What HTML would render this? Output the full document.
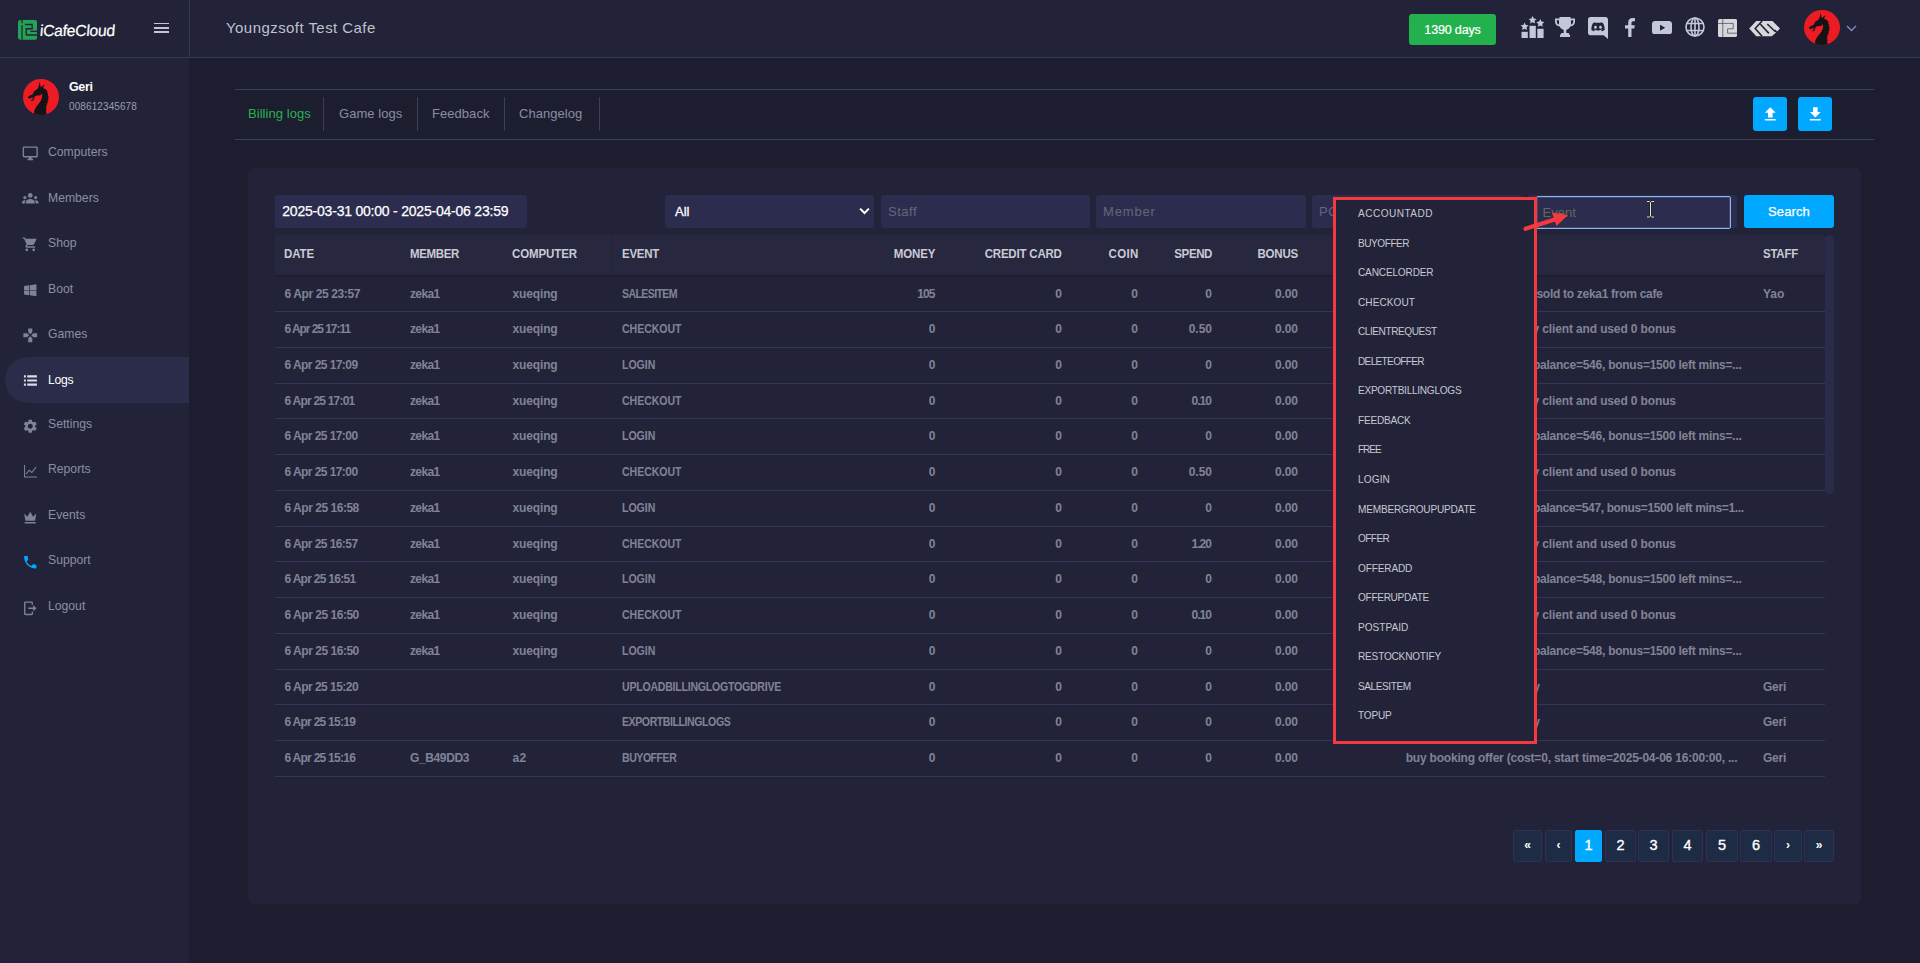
<!DOCTYPE html>
<html lang="en">
<head>
<meta charset="utf-8">
<title>iCafeCloud - Billing logs</title>
<style>
*{box-sizing:border-box;margin:0;padding:0}
html,body{width:1920px;height:963px;overflow:hidden}
body{background:#1d1d30;font-family:"Liberation Sans",sans-serif;color:#8a8da0;font-size:12px;position:relative}
.abs{position:absolute}
/* header */
#header{position:absolute;left:0;top:0;width:1920px;height:58px;background:#222338;border-bottom:1px solid #34375a}
#logo-box{position:absolute;left:0;top:0;width:190px;height:57px;border-right:1px solid #34375a}
#logo-ic{position:absolute;left:18px;top:20px;width:19.200px;height:19.800px}
#logo-tx{position:absolute;left:39px;top:20px;font-size:15.800px;color:#fff;letter-spacing:-.32px;line-height:22px;white-space:nowrap;-webkit-text-stroke:.2px #fff;transform:skewX(-5deg);transform-origin:0 100%}
#burger{position:absolute;left:153.500px;top:22.500px;width:15.500px;height:12px}
#burger i{display:block;height:1.900px;background:#c3c5d2;margin-bottom:2.500px}
#title{position:absolute;left:226px;top:18px;font-size:15px;line-height:20px;color:#bfc1cf;letter-spacing:.44px;white-space:nowrap}
#days{position:absolute;left:1409px;top:14px;width:87px;height:31px;background:#23b14d;border-radius:3px;color:#fff;font-size:12.5px;line-height:33px;text-align:center;letter-spacing:-.15px;-webkit-text-stroke:.2px #fff}
.hic{position:absolute;fill:#c4c7d8}
#av2{position:absolute;left:1804px;top:10px;width:36px;height:35px}
/* sidebar */
#sidebar{position:absolute;left:0;top:58px;width:189px;height:905px;background:#222338}
#av1{position:absolute;left:23.300px;top:20.800px;width:36px;height:36px}
#uname{position:absolute;left:69px;top:20px;font-size:12.500px;font-weight:bold;color:#fff;line-height:18px;letter-spacing:-.35px}
#uphone{position:absolute;left:69px;top:41.600px;font-size:10px;color:#9a9db0;line-height:14px;letter-spacing:.1px}
.mi{position:absolute;left:5px;width:184px;height:45.600px;margin-top:1.200px;border-radius:23px 0 0 23px;color:#8b8fa5;font-size:12.200px;line-height:46.800px;padding-left:43px;white-space:nowrap}
.mi svg{position:absolute;left:17.100px;top:15.400px;width:16.500px;height:16.500px;fill:#7f8399}
.mi.on{background:#2a2c49;color:#fff;letter-spacing:-.3px}
.mi.on svg{fill:#d9dbe6}
/* main */
#tabs{position:absolute;left:235px;top:89px;width:1639px;height:51px;border-top:1px solid #3c3e54;border-bottom:1px solid #3c3e54}
.tab{position:absolute;top:7px;height:35px;line-height:33.500px;font-size:13px;color:#8a8da0;white-space:nowrap;letter-spacing:.05px}
.tab.on{color:#27b24c}
.tsep{position:absolute;top:7px;width:1px;height:34px;background:#3c3e54}
.tbtn{position:absolute;top:7px;width:34px;height:34px;border-radius:3px;background:#00a8ff}
.tbtn svg{position:absolute;left:7.700px;top:7.900px;width:18.600px;height:18.600px;fill:#fff}
#card{position:absolute;left:248px;top:168px;width:1613px;height:736px;background:#222338;border-radius:6px}
.inp{position:absolute;top:27px;height:33px;background:#2c2d4e;border-radius:3px;font-size:13px;line-height:33px;color:#64667a;padding-left:8px;white-space:nowrap;overflow:hidden}
#evt{position:absolute;left:1287.500px;top:27.700px;width:195.500px;height:33.300px;background:#2c2d4e;border:1px solid #8ab4f8;border-radius:2px;box-shadow:inset 0 0 0 1px rgba(255,255,255,.12);font-size:13px;line-height:31px;color:#63665f;padding-left:6px}
#search{position:absolute;left:1496px;top:27px;width:90px;height:33px;background:#00a8ff;border-radius:3px;color:#fff;font-size:13px;line-height:33px;text-align:center;letter-spacing:.1px;-webkit-text-stroke:.25px #fff}
/* table */
#thead{position:absolute;left:27px;top:67px;width:1550px;height:42px;background:#27283f;border-bottom:2px solid #1d1e31}
#thead i{position:absolute;left:337px;top:0;width:1px;height:40px;background:rgba(0,0,0,.13)}
#thead span{position:absolute;top:0;line-height:38px;font-size:12.5px;font-weight:bold;color:#c9cad4;white-space:nowrap}
.rb{position:absolute;left:27px;width:1550px;height:1px;background:#33365a}
.r{position:absolute;left:27px;width:1550px;height:36px}
.r span{position:absolute;top:0;line-height:36px;font-size:12px;font-weight:bold;color:#808397;white-space:nowrap}
.ra{text-align:right}
#sb{position:absolute;left:1577px;top:67px;width:9px;height:259px;border-radius:5px;background:#292b48}
/* pagination */
.pg{position:absolute;top:662px;height:32px;background:#1d2b44;border:1px solid #2f3154;border-radius:2px;color:#fff;font-size:14.500px;line-height:29px;text-align:center;-webkit-text-stroke:.35px #fff}
.pg.sm{font-size:12px;font-weight:bold;line-height:28px;-webkit-text-stroke:0}
.pg.on{background:#00a8ff;border-color:#00a8ff}
/* dropdown */
#dd{position:absolute;left:1333.200px;top:196.900px;width:203.800px;height:547.300px;border:3.300px solid #f5393f;background:#222338}
#dd div{position:absolute;left:22.300px;font-size:11.200px;color:#c6c8d3;line-height:16px;white-space:nowrap}
</style>
</head>
<body>
<div id="header">
  <div id="logo-box">
    <svg id="logo-ic" viewBox="0 0 20 20" preserveAspectRatio="none"><rect x="0" y="0" width="20" height="20" rx="2.5" fill="#23a455"/><path d="M4.2 0v3.2M4.2 5v15" stroke="#222338" stroke-width="1.3" fill="none"/><path d="M7.2 4.6h7.6v4.2H8.6v6.4h11.4" stroke="#222338" stroke-width="1.4" fill="none"/><path d="M12.8 11.4h7.2" stroke="#222338" stroke-width="1.3"/></svg>
    <div id="logo-tx">iCafeCloud</div>
    <div id="burger"><i></i><i></i><i></i></div>
  </div>
  <div id="title">Youngzsoft Test Cafe</div>
  <div id="days">1390 days</div>
  <svg class="hic" style="left:1520px;top:15px;width:25px;height:24px" viewBox="0 0 25 24"><polygon points="4.60,7.40 5.83,9.90 8.59,10.30 6.60,12.25 7.07,15.00 4.60,13.70 2.13,15.00 2.60,12.25 0.61,10.30 3.37,9.90"/><polygon points="12.60,1.00 13.83,3.50 16.59,3.90 14.60,5.85 15.07,8.60 12.60,7.30 10.13,8.60 10.60,5.85 8.61,3.90 11.37,3.50"/><polygon points="20.30,4.10 21.53,6.60 24.29,7.00 22.30,8.95 22.77,11.70 20.30,10.40 17.83,11.70 18.30,8.95 16.31,7.00 19.07,6.60"/><rect x="1.500" y="16.800" width="6.300" height="6.200"/><rect x="9.500" y="10.800" width="6.300" height="12.200"/><rect x="17.300" y="13.800" width="6.300" height="9.200"/></svg><svg class="hic" style="left:1555px;top:17px;width:20px;height:20px" viewBox="0 0 20 20"><path d="M4.500 0h11v1.500H20v3.200c0 2.600-2 4.600-4.700 4.900-.8 1.700-2.300 2.900-4 3.300V16h2.200l1.500 2.200V20H5v-1.800L6.500 16h2.200v-3.100c-1.700-.4-3.200-1.600-4-3.300C2 9.300 0 7.300 0 4.700V1.500h4.500zM1.800 3.300v1.400c0 1.400.9 2.500 2.300 2.900-.1-.5-.1-1-.1-1.500V3.300zm16.400 0H16v2.800c0 .5 0 1-.1 1.500 1.400-.4 2.300-1.500 2.300-2.900z"/></svg><svg class="hic" style="left:1588px;top:17px;width:20px;height:22px" viewBox="0 0 20 22"><path fill-rule="evenodd" d="M2.200 0h15.300C18.900 0 20 1.100 20 2.400V22l-4.300-3.800H2.200C1 18.200 0 17.200 0 16V2.400C0 1.100 1 0 2.200 0zM7.300 5.300c-1.200.2-2.200.7-2.200.7C3.900 7.800 3.300 10 3.400 13c1.200 1 2.700 1.300 2.700 1.300l.7-1c-.6-.2-1.100-.5-1.100-.5l.3-.2c2.500 1.200 5.500 1.200 8 0l.3.200s-.5.300-1.100.5l.7 1s1.500-.3 2.700-1.300c.1-3-.5-5.200-1.700-7 0 0-1-.5-2.200-.7l-.3.600c-1.600-.3-3.200-.3-4.800 0zM7.500 8.700c.8 0 1.400.7 1.400 1.500s-.6 1.500-1.400 1.500-1.400-.7-1.400-1.500.6-1.500 1.400-1.500zm5 0c.8 0 1.400.7 1.400 1.500s-.6 1.500-1.400 1.500-1.400-.7-1.400-1.500.6-1.500 1.400-1.500z"/></svg><svg class="hic" style="left:1625px;top:18px;width:10px;height:19px" viewBox="0 0 10 19"><path d="M6.500 19v-8.500h2.800l.5-3.300H6.500V5c0-1 .4-1.700 1.800-1.700H10V.3C9.600.2 8.600 0 7.500 0 5 0 3.200 1.600 3.200 4.500v2.700H0v3.300h3.200V19z"/></svg><svg class="hic" style="left:1652px;top:20.500px;width:20px;height:13.500px" viewBox="0 0 20 13.500"><path fill-rule="evenodd" d="M3 0h14c1.700 0 3 1.300 3 3v7.500c0 1.700-1.300 3-3 3H3c-1.700 0-3-1.300-3-3V3c0-1.700 1.300-3 3-3zm5 3.700v6.100l5.200-3.050z"/></svg><svg class="hic" style="left:1685px;top:17px;width:20px;height:20px;fill:none;stroke:#c4c7d8;stroke-width:1.600" viewBox="0 0 20 20"><circle cx="10" cy="10" r="9"/><ellipse cx="10" cy="10" rx="4" ry="9"/><path d="M10 1v18M1.800 6.500h16.400M1.800 13.500h16.400"/></svg><svg class="hic" style="left:1718px;top:19px;width:19px;height:18px;fill:#d8d8dc" viewBox="0 0 19 18"><path d="M1.200 0h16.300c.8 0 1.500.7 1.500 1.500v15c0 .8-.7 1.500-1.500 1.500H1.500C.7 18 0 17.300 0 16.500V1.200z"/><path d="M4.800 0v18M0 4.400h15.200v5.400H9.600v4.400H19" fill="none" stroke="#222338" stroke-opacity=".75" stroke-width=".8"/></svg><svg class="hic" style="left:1749px;top:20px;width:31px;height:17px;fill:#d8d8dc" viewBox="0 0 31 17"><path d="M.2 8.500L7.250 1H23.500L31 8.500l-2.900 2.900-1.900-1.800-1 1L27.200 12.500 22.700 16.300H7.250z"/><path d="M13.100 1L6.200 8.500l6.900 7.800M11.400 4.300l8.500 9.100M18.300 4l8.400 8" fill="none" stroke="#222338" stroke-width="1.600"/></svg><svg id="av2" viewBox="0 0 36 36" preserveAspectRatio="none"><defs><clipPath id="cav2"><circle cx="18" cy="18" r="18"/></clipPath></defs><circle cx="18" cy="18" r="18" fill="#ed1c24"/><path clip-path="url(#cav2)" d="M16.7 2.700L17.700 8.200L18.400 7.700L21.900 5.200L19.900 9L22.400 10L23.900 11.500L24.700 13.200L23.900 13.700L25.400 15.500L24.700 16.200L25.900 18.400L24.900 18.900L25.700 21.200L24.400 21.700L24.900 23.900L23.700 24.400L23.900 26.400L22.900 26.900L23.700 28.900L22.700 29.400L23.700 31.400L22.900 31.900L23.900 36L11 36L11.200 31.900L12.500 28.900L15 25.400L17.400 22.400L18.900 18.900L19.200 16.500L18.400 14.300L17.600 16.300L14 16.600L11.800 17.200L11 19.900L10 21.700L8.500 21.900L8.200 21.200L9.500 20.400L10 18L9 18.400L6.500 19.700L5.100 18.700L5.200 17.400L7 16.500L9.500 15.500L10.500 13.500L11.200 12.200L14 10.200L15.200 9Z" fill="#141316"/></svg><svg class="hic" style="left:1846px;top:25px;width:11px;height:7px;fill:none;stroke:#7f8cba;stroke-width:1.400" viewBox="0 0 11 7"><path d="M1 1l4.500 4.500L10 1"/></svg>
</div>
<div id="sidebar">
  <svg id="av1" viewBox="0 0 36 36"><defs><clipPath id="cav1"><circle cx="18" cy="18" r="18"/></clipPath></defs><circle cx="18" cy="18" r="18" fill="#ed1c24"/><path clip-path="url(#cav1)" d="M16.7 2.700L17.700 8.200L18.400 7.700L21.900 5.200L19.900 9L22.400 10L23.900 11.500L24.700 13.200L23.900 13.700L25.400 15.500L24.700 16.200L25.900 18.400L24.900 18.900L25.700 21.200L24.400 21.700L24.900 23.900L23.700 24.400L23.900 26.400L22.900 26.900L23.700 28.900L22.700 29.400L23.700 31.400L22.900 31.900L23.900 36L11 36L11.200 31.900L12.500 28.900L15 25.400L17.400 22.400L18.900 18.900L19.200 16.500L18.400 14.300L17.600 16.300L14 16.600L11.800 17.200L11 19.900L10 21.700L8.500 21.900L8.200 21.200L9.500 20.400L10 18L9 18.400L6.500 19.700L5.100 18.700L5.200 17.400L7 16.500L9.500 15.500L10.500 13.500L11.200 12.200L14 10.200L15.200 9Z" fill="#141316"/></svg>
  <div id="uname">Geri</div>
  <div id="uphone">008612345678</div>
  <div class="mi" style="top:70px"><svg viewBox="0 0 24 24"><path d="M21 2H3c-1.100 0-2 .9-2 2v12c0 1.100.9 2 2 2h7v2H8v2h8v-2h-2v-2h7c1.100 0 2-.9 2-2V4c0-1.100-.9-2-2-2zm0 14H3V4h18v12z"/></svg>Computers</div>
  <div class="mi" style="top:116px"><svg viewBox="0 0 24 24"><circle cx="12" cy="6.400" r="3.400"/><path d="M5.500 18v-1.800c0-3 4-4.600 6.500-4.600s6.500 1.600 6.500 4.600V18z"/><circle cx="4.200" cy="9.600" r="2.300"/><circle cx="19.800" cy="9.600" r="2.300"/><path d="M0 18v-1.500c0-2 2.200-3.200 4.200-3.200.5 0 1 .1 1.400.2-1 1-1.600 2.200-1.600 3.700V18zM24 18v-1.500c0-2-2.200-3.200-4.200-3.200-.5 0-1 .1-1.400.2 1 1 1.600 2.200 1.600 3.700V18z"/></svg>Members</div>
  <div class="mi" style="top:161px"><svg viewBox="0 0 24 24"><path d="M7 18c-1.100 0-1.990.9-1.990 2S5.900 22 7 22s2-.9 2-2-.9-2-2-2zM1 2v2h2l3.600 7.590-1.350 2.450c-.16.28-.25.61-.25.96 0 1.100.9 2 2 2h12v-2H7.420c-.14 0-.25-.11-.25-.25l.03-.12.9-1.630h7.450c.75 0 1.410-.41 1.750-1.030l3.580-6.490c.08-.14.12-.31.12-.48 0-.55-.45-1-1-1H5.210l-.94-2H1zm16 16c-1.100 0-1.990.9-1.990 2s.89 2 1.990 2 2-.9 2-2-.9-2-2-2z"/></svg>Shop</div>
  <div class="mi" style="top:207px"><svg viewBox="0 0 24 24"><path d="M3 5.700l7.400-1v6.800H3zM11.400 4.550L21 3.200v8.300h-9.600zM3 12.500h7.400v6.800l-7.400-1zM11.400 12.500H21v8.300l-9.600-1.350z"/></svg>Boot</div>
  <div class="mi" style="top:252px"><svg viewBox="0 0 24 24"><path d="M15 7.500V2H9v5.500l3 3 3-3zM7.500 9H2v6h5.500l3-3-3-3zM9 16.500V22h6v-5.500l-3-3-3 3zM16.500 9l-3 3 3 3H22V9h-5.500z"/></svg>Games</div>
  <div class="mi on" style="top:298px"><svg viewBox="0 0 24 24"><path d="M2.800 3.400h2.900v3H2.800zM7.600 3.400h14.100v3H7.600zM2.800 9.400h2.900v3H2.800zM7.600 9.400h14.100v3H7.600zM2.800 15.400h2.900v3H2.800zM7.600 15.400h14.100v3H7.600z"/></svg>Logs</div>
  <div class="mi" style="top:343px;line-height:45.600px"><svg viewBox="0 0 24 24"><path d="M19.140 12.940c.04-.3.06-.61.06-.94 0-.32-.02-.64-.07-.94l2.030-1.580c.18-.14.23-.41.12-.61l-1.920-3.320c-.12-.22-.37-.29-.59-.22l-2.390.96c-.5-.38-1.030-.7-1.620-.94l-.36-2.540c-.04-.24-.24-.41-.48-.41h-3.840c-.24 0-.43.17-.47.41l-.36 2.540c-.59.24-1.130.57-1.620.94l-2.390-.96c-.22-.08-.47 0-.59.22L2.740 8.870c-.12.21-.08.47.12.61l2.030 1.580c-.05.3-.09.63-.09.94s.02.64.07.94l-2.030 1.580c-.18.14-.23.41-.12.61l1.920 3.320c.12.22.37.29.59.22l2.390-.96c.5.38 1.030.7 1.620.94l.36 2.540c.05.24.24.41.48.41h3.840c.24 0 .44-.17.47-.41l.36-2.540c.59-.24 1.130-.56 1.620-.94l2.390.96c.22.08.47 0 .59-.22l1.920-3.320c.12-.22.07-.47-.12-.61l-2.010-1.580zM12 15.600c-1.980 0-3.600-1.620-3.600-3.600s1.620-3.600 3.600-3.600 3.600 1.620 3.600 3.600-1.620 3.600-3.600 3.600z"/></svg>Settings</div>
  <div class="mi" style="top:388px;line-height:45.600px"><svg viewBox="0 0 24 24"><path d="M3 3h1.500v16.500H22V21H3z"/><path d="M6.300 16.800l-1.100-1 5.300-6.300 3.700 3.200 5.700-7.100 1.200.95-6.700 8.350-3.750-3.250z"/></svg>Reports</div>
  <div class="mi" style="top:434px;line-height:45.600px"><svg viewBox="0 0 24 24"><path d="M4 19h16v2H4zM3.200 6.500l4.600 4.600L12 4l4.200 7.100 4.600-4.600L19 17H5z"/></svg>Events</div>
  <div class="mi" style="top:479px;line-height:45.600px"><svg viewBox="0 0 24 24" style="fill:#00a8ff"><path d="M6.620 10.790c1.440 2.830 3.760 5.140 6.590 6.590l2.200-2.200c.27-.27.67-.36 1.020-.24 1.120.37 2.330.57 3.570.57.55 0 1 .45 1 1V20c0 .55-.45 1-1 1-9.390 0-17-7.610-17-17 0-.55.45-1 1-1h3.500c.55 0 1 .45 1 1 0 1.250.2 2.450.57 3.570.11.35.03.74-.25 1.020l-2.200 2.200z"/></svg>Support</div>
  <div class="mi" style="top:525px;line-height:45.600px"><svg viewBox="0 0 24 24"><path d="M14 2H5c-1.100 0-2 .9-2 2v16c0 1.100.9 2 2 2h9c1.100 0 2-.9 2-2v-3h-2v3H5V4h9v3h2V4c0-1.100-.9-2-2-2z"/><path d="M17 8l-1.400 1.400 1.600 1.600H9v2h8.200l-1.600 1.600L17 16l4-4z"/></svg>Logout</div>
</div>
<div id="tabs">
  <div class="tab on" style="left:13px">Billing logs</div>
  <div class="tsep" style="left:88px"></div>
  <div class="tab" style="left:104px">Game logs</div>
  <div class="tsep" style="left:182px"></div>
  <div class="tab" style="left:197px">Feedback</div>
  <div class="tsep" style="left:269px"></div>
  <div class="tab" style="left:284px">Changelog</div>
  <div class="tsep" style="left:364px"></div>
  <div class="tbtn" style="left:1518px"><svg viewBox="0 0 24 24"><path d="M9 16h6v-6h4l-7-7-7 7h4zm-4 2h14v2H5z"/></svg></div>
  <div class="tbtn" style="left:1563px"><svg viewBox="0 0 24 24"><path d="M19 9h-4V3H9v6H5l7 7 7-7zM5 18v2h14v-2H5z"/></svg></div>
</div>
<div id="card">
  <div class="inp" style="left:27px;width:252px;color:#fff;font-size:14px;letter-spacing:-.214px;padding-left:7.300px;-webkit-text-stroke:.25px #fff">2025-03-31 00:00 - 2025-04-06 23:59</div>
  <div class="inp" style="left:417px;width:209px;color:#fff;padding-left:10px;-webkit-text-stroke:.3px #fff">All<svg style="position:absolute;left:194px;top:11.500px;width:11px;height:8.800px" viewBox="0 0 10 8"><path d="M1 1.500l4 4 4-4" fill="none" stroke="#fff" stroke-width="1.800"/></svg></div>
  <div class="inp" style="left:633px;width:209px;padding-left:7px;letter-spacing:.5px">Staff</div>
  <div class="inp" style="left:848px;width:210px;padding-left:7px;letter-spacing:.85px">Member</div>
  <div class="inp" style="left:1064px;width:210px;padding-left:7px;letter-spacing:.5px">PC</div>
  <div class="inp" style="left:1280px;width:209px;padding:0"></div>
  <div id="evt">Event</div>
  <div id="search">Search</div>
  <div id="thead"><i></i><span style="left:9px;letter-spacing:-0.123px;transform:scaleX(0.92);transform-origin:0 50%">DATE</span><span style="left:135px;letter-spacing:-0.382px;transform:scaleX(0.92);transform-origin:0 50%">MEMBER</span><span style="left:237px;letter-spacing:-0.109px;transform:scaleX(0.92);transform-origin:0 50%">COMPUTER</span><span style="left:347px;letter-spacing:-0.292px;transform:scaleX(0.92);transform-origin:0 50%">EVENT</span><span style="right:889.584px;letter-spacing:-0.091px;transform:scaleX(0.92);transform-origin:100% 50%">MONEY</span><span style="right:763.201px;letter-spacing:-0.219px;transform:scaleX(0.92);transform-origin:100% 50%">CREDIT CARD</span><span style="right:686.687px;letter-spacing:0.34px;transform:scaleX(0.92);transform-origin:100% 50%">COIN</span><span style="right:613.374px;letter-spacing:-0.407px;transform:scaleX(0.92);transform-origin:100% 50%">SPEND</span><span style="right:527.206px;letter-spacing:-0.224px;transform:scaleX(0.92);transform-origin:100% 50%">BONUS</span><span style="left:1488px;letter-spacing:-0.26px;transform:scaleX(0.92);transform-origin:0 50%">STAFF</span></div>
<div class="rb" style="top:143px"></div><div class="r" style="top:108px"><span style="left:9.5px;letter-spacing:-0.388px">6 Apr 25 23:57</span><span style="left:135px;letter-spacing:-0.639px">zeka1</span><span style="left:237.5px;letter-spacing:-0.143px">xueqing</span><span style="left:347px;letter-spacing:-0.686px;transform:scaleX(0.88);transform-origin:0 50%">SALESITEM</span><span style="right:890.34px;letter-spacing:-0.84px">105</span><span style="right:762.873px;letter-spacing:0.127px">0</span><span style="right:686.873px;letter-spacing:0.127px">0</span><span style="right:612.873px;letter-spacing:0.127px">0</span><span style="right:527.088px;letter-spacing:-0.088px">0.00</span><span style="right:162.491px;letter-spacing:-0.291px">1 x Coca Cola sold to zeka1 from cafe</span><span style="left:1488px;letter-spacing:-0.048px">Yao</span></div>
<div class="rb" style="top:179px"></div><div class="r" style="top:143px"><span style="left:9.5px;letter-spacing:-1.055px">6 Apr 25 17:11</span><span style="left:135px;letter-spacing:-0.639px">zeka1</span><span style="left:237.5px;letter-spacing:-0.143px">xueqing</span><span style="left:347px;letter-spacing:-0.048px;transform:scaleX(0.88);transform-origin:0 50%">CHECKOUT</span><span style="right:889.373px;letter-spacing:0.127px">0</span><span style="right:762.873px;letter-spacing:0.127px">0</span><span style="right:686.873px;letter-spacing:0.127px">0</span><span style="right:613.026px;letter-spacing:-0.026px">0.50</span><span style="right:527.088px;letter-spacing:-0.088px">0.00</span><span style="right:149.134px;letter-spacing:-0.134px">checkout by client and used 0 bonus</span></div>
<div class="rb" style="top:215px"></div><div class="r" style="top:179px"><span style="left:9.5px;letter-spacing:-0.566px">6 Apr 25 17:09</span><span style="left:135px;letter-spacing:-0.639px">zeka1</span><span style="left:237.5px;letter-spacing:-0.143px">xueqing</span><span style="left:347px;letter-spacing:-0.031px;transform:scaleX(0.88);transform-origin:0 50%">LOGIN</span><span style="right:889.373px;letter-spacing:0.127px">0</span><span style="right:762.873px;letter-spacing:0.127px">0</span><span style="right:686.873px;letter-spacing:0.127px">0</span><span style="right:612.873px;letter-spacing:0.127px">0</span><span style="right:527.088px;letter-spacing:-0.088px">0.00</span><span style="right:83.448px;letter-spacing:-0.248px">login from client, balance=546, bonus=1500 left mins=...</span></div>
<div class="rb" style="top:250px"></div><div class="r" style="top:215px"><span style="left:9.5px;letter-spacing:-0.781px">6 Apr 25 17:01</span><span style="left:135px;letter-spacing:-0.639px">zeka1</span><span style="left:237.5px;letter-spacing:-0.143px">xueqing</span><span style="left:347px;letter-spacing:-0.048px;transform:scaleX(0.88);transform-origin:0 50%">CHECKOUT</span><span style="right:889.373px;letter-spacing:0.127px">0</span><span style="right:762.873px;letter-spacing:0.127px">0</span><span style="right:686.873px;letter-spacing:0.127px">0</span><span style="right:613.963px;letter-spacing:-0.963px">0.10</span><span style="right:527.088px;letter-spacing:-0.088px">0.00</span><span style="right:149.134px;letter-spacing:-0.134px">checkout by client and used 0 bonus</span></div>
<div class="rb" style="top:286px"></div><div class="r" style="top:250px"><span style="left:9.5px;letter-spacing:-0.566px">6 Apr 25 17:00</span><span style="left:135px;letter-spacing:-0.639px">zeka1</span><span style="left:237.5px;letter-spacing:-0.143px">xueqing</span><span style="left:347px;letter-spacing:-0.031px;transform:scaleX(0.88);transform-origin:0 50%">LOGIN</span><span style="right:889.373px;letter-spacing:0.127px">0</span><span style="right:762.873px;letter-spacing:0.127px">0</span><span style="right:686.873px;letter-spacing:0.127px">0</span><span style="right:612.873px;letter-spacing:0.127px">0</span><span style="right:527.088px;letter-spacing:-0.088px">0.00</span><span style="right:83.448px;letter-spacing:-0.248px">login from client, balance=546, bonus=1500 left mins=...</span></div>
<div class="rb" style="top:322px"></div><div class="r" style="top:286px"><span style="left:9.5px;letter-spacing:-0.566px">6 Apr 25 17:00</span><span style="left:135px;letter-spacing:-0.639px">zeka1</span><span style="left:237.5px;letter-spacing:-0.143px">xueqing</span><span style="left:347px;letter-spacing:-0.048px;transform:scaleX(0.88);transform-origin:0 50%">CHECKOUT</span><span style="right:889.373px;letter-spacing:0.127px">0</span><span style="right:762.873px;letter-spacing:0.127px">0</span><span style="right:686.873px;letter-spacing:0.127px">0</span><span style="right:613.026px;letter-spacing:-0.026px">0.50</span><span style="right:527.088px;letter-spacing:-0.088px">0.00</span><span style="right:149.134px;letter-spacing:-0.134px">checkout by client and used 0 bonus</span></div>
<div class="rb" style="top:358px"></div><div class="r" style="top:322px"><span style="left:9.5px;letter-spacing:-0.474px">6 Apr 25 16:58</span><span style="left:135px;letter-spacing:-0.639px">zeka1</span><span style="left:237.5px;letter-spacing:-0.143px">xueqing</span><span style="left:347px;letter-spacing:-0.031px;transform:scaleX(0.88);transform-origin:0 50%">LOGIN</span><span style="right:889.373px;letter-spacing:0.127px">0</span><span style="right:762.873px;letter-spacing:0.127px">0</span><span style="right:686.873px;letter-spacing:0.127px">0</span><span style="right:612.873px;letter-spacing:0.127px">0</span><span style="right:527.088px;letter-spacing:-0.088px">0.00</span><span style="right:81.362px;letter-spacing:-0.362px">login from client, balance=547, bonus=1500 left mins=1...</span></div>
<div class="rb" style="top:393px"></div><div class="r" style="top:358px"><span style="left:9.5px;letter-spacing:-0.566px">6 Apr 25 16:57</span><span style="left:135px;letter-spacing:-0.639px">zeka1</span><span style="left:237.5px;letter-spacing:-0.143px">xueqing</span><span style="left:347px;letter-spacing:-0.048px;transform:scaleX(0.88);transform-origin:0 50%">CHECKOUT</span><span style="right:889.373px;letter-spacing:0.127px">0</span><span style="right:762.873px;letter-spacing:0.127px">0</span><span style="right:686.873px;letter-spacing:0.127px">0</span><span style="right:613.963px;letter-spacing:-0.963px">1.20</span><span style="right:527.088px;letter-spacing:-0.088px">0.00</span><span style="right:149.134px;letter-spacing:-0.134px">checkout by client and used 0 bonus</span></div>
<div class="rb" style="top:429px"></div><div class="r" style="top:393px"><span style="left:9.5px;letter-spacing:-0.709px">6 Apr 25 16:51</span><span style="left:135px;letter-spacing:-0.639px">zeka1</span><span style="left:237.5px;letter-spacing:-0.143px">xueqing</span><span style="left:347px;letter-spacing:-0.031px;transform:scaleX(0.88);transform-origin:0 50%">LOGIN</span><span style="right:889.373px;letter-spacing:0.127px">0</span><span style="right:762.873px;letter-spacing:0.127px">0</span><span style="right:686.873px;letter-spacing:0.127px">0</span><span style="right:612.873px;letter-spacing:0.127px">0</span><span style="right:527.088px;letter-spacing:-0.088px">0.00</span><span style="right:83.448px;letter-spacing:-0.248px">login from client, balance=548, bonus=1500 left mins=...</span></div>
<div class="rb" style="top:465px"></div><div class="r" style="top:429px"><span style="left:9.5px;letter-spacing:-0.474px">6 Apr 25 16:50</span><span style="left:135px;letter-spacing:-0.639px">zeka1</span><span style="left:237.5px;letter-spacing:-0.143px">xueqing</span><span style="left:347px;letter-spacing:-0.048px;transform:scaleX(0.88);transform-origin:0 50%">CHECKOUT</span><span style="right:889.373px;letter-spacing:0.127px">0</span><span style="right:762.873px;letter-spacing:0.127px">0</span><span style="right:686.873px;letter-spacing:0.127px">0</span><span style="right:613.963px;letter-spacing:-0.963px">0.10</span><span style="right:527.088px;letter-spacing:-0.088px">0.00</span><span style="right:149.134px;letter-spacing:-0.134px">checkout by client and used 0 bonus</span></div>
<div class="rb" style="top:501px"></div><div class="r" style="top:465px"><span style="left:9.5px;letter-spacing:-0.474px">6 Apr 25 16:50</span><span style="left:135px;letter-spacing:-0.639px">zeka1</span><span style="left:237.5px;letter-spacing:-0.143px">xueqing</span><span style="left:347px;letter-spacing:-0.031px;transform:scaleX(0.88);transform-origin:0 50%">LOGIN</span><span style="right:889.373px;letter-spacing:0.127px">0</span><span style="right:762.873px;letter-spacing:0.127px">0</span><span style="right:686.873px;letter-spacing:0.127px">0</span><span style="right:612.873px;letter-spacing:0.127px">0</span><span style="right:527.088px;letter-spacing:-0.088px">0.00</span><span style="right:83.448px;letter-spacing:-0.248px">login from client, balance=548, bonus=1500 left mins=...</span></div>
<div class="rb" style="top:536px"></div><div class="r" style="top:501px"><span style="left:9.5px;letter-spacing:-0.524px">6 Apr 25 15:20</span><span style="left:347px;letter-spacing:-0.268px;transform:scaleX(0.88);transform-origin:0 50%">UPLOADBILLINGLOGTOGDRIVE</span><span style="right:889.373px;letter-spacing:0.127px">0</span><span style="right:762.873px;letter-spacing:0.127px">0</span><span style="right:686.873px;letter-spacing:0.127px">0</span><span style="right:612.873px;letter-spacing:0.127px">0</span><span style="right:527.088px;letter-spacing:-0.088px">0.00</span><span style="right:285.173px;letter-spacing:-0.173px">Processed successfully</span><span style="left:1488px;letter-spacing:-0.253px">Geri</span></div>
<div class="rb" style="top:572px"></div><div class="r" style="top:536px"><span style="left:9.5px;letter-spacing:-0.738px">6 Apr 25 15:19</span><span style="left:347px;letter-spacing:-0.486px;transform:scaleX(0.88);transform-origin:0 50%">EXPORTBILLINGLOGS</span><span style="right:889.373px;letter-spacing:0.127px">0</span><span style="right:762.873px;letter-spacing:0.127px">0</span><span style="right:686.873px;letter-spacing:0.127px">0</span><span style="right:612.873px;letter-spacing:0.127px">0</span><span style="right:527.088px;letter-spacing:-0.088px">0.00</span><span style="right:285.173px;letter-spacing:-0.173px">Processed successfully</span><span style="left:1488px;letter-spacing:-0.253px">Geri</span></div>
<div class="rb" style="top:608px"></div><div class="r" style="top:572px"><span style="left:9.5px;letter-spacing:-0.738px">6 Apr 25 15:16</span><span style="left:135px;letter-spacing:-0.378px">G_B49DD3</span><span style="left:237.5px;letter-spacing:0.327px">a2</span><span style="left:347px;letter-spacing:-0.537px;transform:scaleX(0.88);transform-origin:0 50%">BUYOFFER</span><span style="right:889.373px;letter-spacing:0.127px">0</span><span style="right:762.873px;letter-spacing:0.127px">0</span><span style="right:686.873px;letter-spacing:0.127px">0</span><span style="right:612.873px;letter-spacing:0.127px">0</span><span style="right:527.088px;letter-spacing:-0.088px">0.00</span><span style="left:1130.7px;letter-spacing:-0.202px">buy booking offer (cost=0, start time=2025-04-06 16:00:00, ...</span><span style="left:1488px;letter-spacing:-0.253px">Geri</span></div>

<div class="pg sm" style="left:1265.3px;width:28.4px">«</div><div class="pg sm" style="left:1297.0px;width:27.0px">‹</div><div class="pg on" style="left:1327.0px;width:27.0px">1</div><div class="pg" style="left:1357.3px;width:30.4px">2</div><div class="pg" style="left:1390.3px;width:30.7px">3</div><div class="pg" style="left:1424.3px;width:30.7px">4</div><div class="pg" style="left:1458.3px;width:31.4px">5</div><div class="pg" style="left:1492.3px;width:31.4px">6</div><div class="pg sm" style="left:1526.3px;width:27.4px">›</div><div class="pg sm" style="left:1556.3px;width:29.4px">»</div>
  <div id="sb"></div>
</div>
<div id="dd"><div style="top:5.00px;letter-spacing:0.514px;transform:scaleX(0.9);transform-origin:0 50%">ACCOUNTADD</div><div style="top:35.00px;letter-spacing:-0.512px;transform:scaleX(0.9);transform-origin:0 50%">BUYOFFER</div><div style="top:64.00px;letter-spacing:-0.181px;transform:scaleX(0.9);transform-origin:0 50%">CANCELORDER</div><div style="top:94.00px;letter-spacing:0.061px;transform:scaleX(0.9);transform-origin:0 50%">CHECKOUT</div><div style="top:123.00px;letter-spacing:-0.493px;transform:scaleX(0.9);transform-origin:0 50%">CLIENTREQUEST</div><div style="top:153.00px;letter-spacing:-0.744px;transform:scaleX(0.9);transform-origin:0 50%">DELETEOFFER</div><div style="top:182.00px;letter-spacing:-0.29px;transform:scaleX(0.9);transform-origin:0 50%">EXPORTBILLINGLOGS</div><div style="top:212.00px;letter-spacing:-0.255px;transform:scaleX(0.9);transform-origin:0 50%">FEEDBACK</div><div style="top:241.00px;letter-spacing:-1.162px;transform:scaleX(0.9);transform-origin:0 50%">FREE</div><div style="top:271.00px;letter-spacing:0.141px;transform:scaleX(0.9);transform-origin:0 50%">LOGIN</div><div style="top:301.00px;letter-spacing:-0.219px;transform:scaleX(0.9);transform-origin:0 50%">MEMBERGROUPUPDATE</div><div style="top:330.00px;letter-spacing:-0.635px;transform:scaleX(0.9);transform-origin:0 50%">OFFER</div><div style="top:360.00px;letter-spacing:-0.158px;transform:scaleX(0.9);transform-origin:0 50%">OFFERADD</div><div style="top:389.00px;letter-spacing:-0.333px;transform:scaleX(0.9);transform-origin:0 50%">OFFERUPDATE</div><div style="top:419.00px;letter-spacing:0.011px;transform:scaleX(0.9);transform-origin:0 50%">POSTPAID</div><div style="top:448.00px;letter-spacing:-0.214px;transform:scaleX(0.9);transform-origin:0 50%">RESTOCKNOTIFY</div><div style="top:478.00px;letter-spacing:-0.479px;transform:scaleX(0.9);transform-origin:0 50%">SALESITEM</div><div style="top:507.00px;letter-spacing:-0.187px;transform:scaleX(0.9);transform-origin:0 50%">TOPUP</div></div>
<svg id="ov" style="position:absolute;left:1515px;top:195px;width:150px;height:40px" viewBox="0 0 150 40">
<path d="M10.500 33.800L46 22.500" stroke="#f5393f" stroke-width="4.200" stroke-linecap="round" fill="none"/>
<path d="M37 17.500L53 20L41.500 31Z" fill="#f5393f"/>
<path d="M132 6.500h2.300l1.200 1 1.200-1h2.300M132 22h2.300l1.200-1 1.200 1h2.300M135.500 7.500v13.500" stroke="#1c1c24" stroke-width="2.200" fill="none" stroke-linejoin="round"/>
<path d="M132 6.500h2.300l1.200 1 1.200-1h2.300M132 22h2.300l1.200-1 1.200 1h2.300M135.500 7.500v13.500" stroke="#ece8cc" stroke-width="1" fill="none"/>
</svg>
</body>
</html>
